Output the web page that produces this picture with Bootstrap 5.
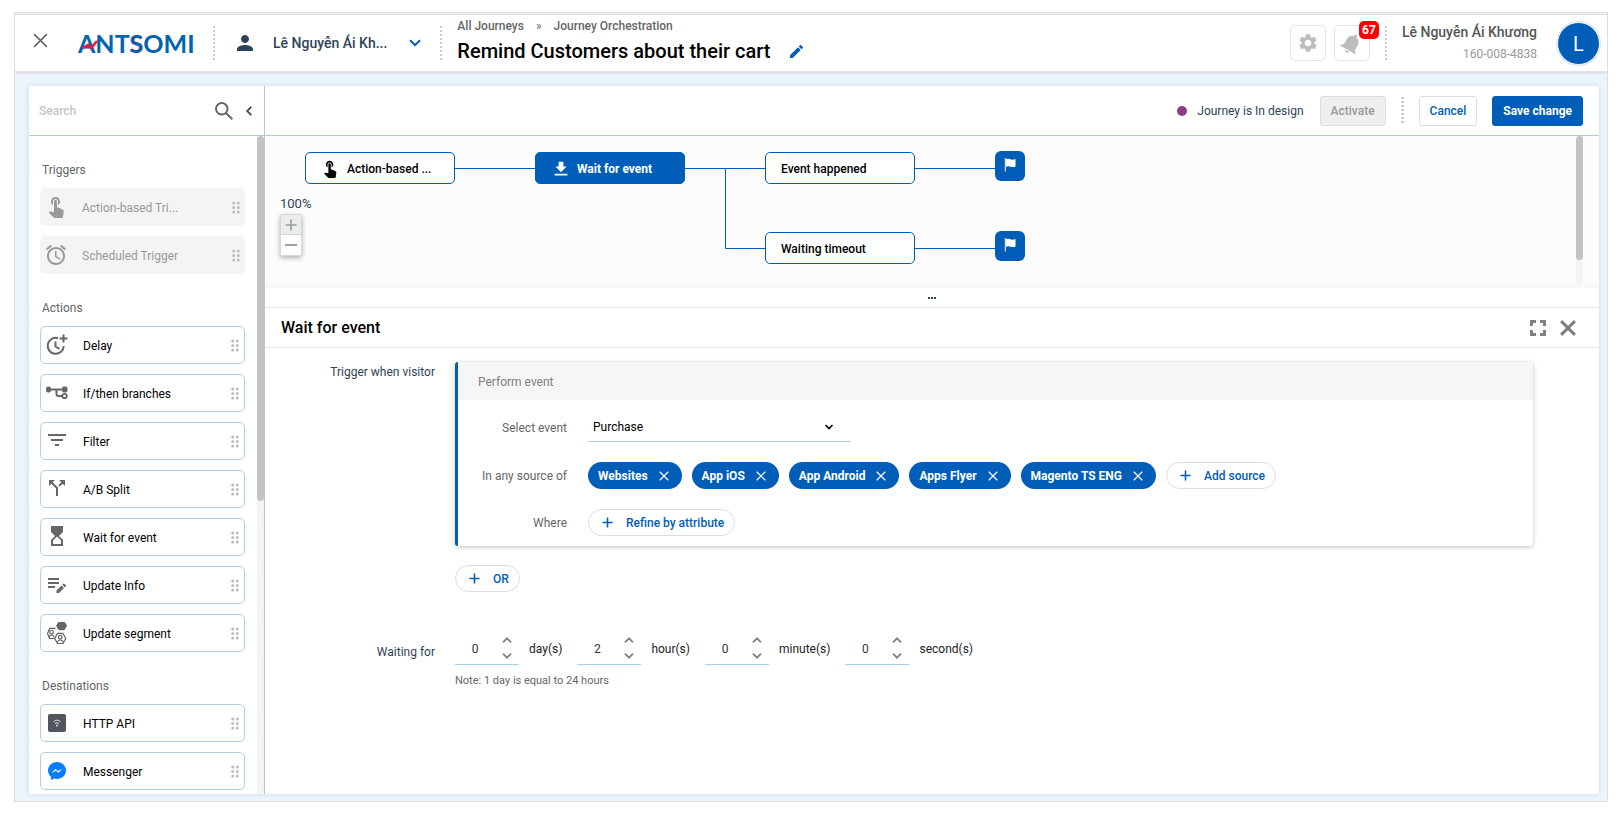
<!DOCTYPE html>
<html lang="en">
<head>
<meta charset="utf-8">
<meta name="viewport" content="width=device-width, initial-scale=1">
<title>Journey Orchestration</title>
<link href="https://cdn.jsdelivr.net/npm/bootstrap@5.3.0/dist/css/bootstrap.min.css" rel="stylesheet">
<style>
:root { --brand: #005eb8; --ink: #2f4358; --muted: #666; --edge: #b5cfe5; }
body { font-family: Roboto, "Liberation Sans", sans-serif; font-size: 12px; line-height: 20px; color: var(--ink); background: #fff; }
.app-shell { height: 100vh; padding: 12px 13px 11px 14px; }
.app-frame { border: 1px solid #ddd; background: #ebf3fb; }
.app-header { height: 60px; margin-top: 1px; padding: 0 7px 0 18px; background: #fff; border-top: 1px solid #ddd; border-bottom: 3px solid #e3e3e8; flex: none; }
.app-body { margin: 12px 8px 7px 14px; background: #fff; min-height: 0; box-shadow: 0 0 4px rgba(0,60,120,.14); }
button { font: inherit; }
.btn { --bs-btn-font-size: 12px; --bs-btn-line-height: 20px; --bs-btn-font-weight: 500; }
.plain-btn { background: none; border: 0; padding: 0; line-height: 0; color: #666; }
svg { fill: currentColor; flex: none; display: block; }
.stroked { fill: none; stroke: currentColor; }
.dots-v { width: 2px; height: 35px; background: repeating-linear-gradient(#ccc 0 2px, transparent 2px 4px); flex: none; }
.dots-v.wide { width: 3px; height: 28px; margin: 0 15px; }
.dots-v.user-split { margin: 0 15px; }
.close-btn { padding-bottom: 6px; margin-right: 30px; }
.brand-logo { position: relative; font: 700 25px/30px Lato, sans-serif; color: #0064ae; text-decoration: none; width: 115px; margin-right: 20px; }
.brand-logo svg { position: absolute; left: 4px; top: 11px; color: #f5163b; }
.brand-logo span { text-shadow: 0 0 1px #f5163b; }
.person-icon { margin: 0 16px 0 18px; }
.account-name { font-size: 14px; line-height: 20px; font-weight: 500; color: var(--ink); }
.account-btn { margin-right: 19px; }
.account-btn svg { margin-left: 22px; color: var(--brand); }
.heading-block { margin-left: 15px; }
.crumbs a { color: var(--muted); font-weight: 500; text-decoration: none; }
.crumbs span { margin: 0 12px; color: var(--muted); }
.page-title { font-size: 20px; font-weight: 500; line-height: 30px; color: #000; }
.rename-btn { color: var(--brand); margin-left: 20px; }
.icon-box { width: 36px; height: 36px; border: 1px solid #e1e5ea; border-radius: 5px; background: #fff; color: #bdbdbd; padding: 0; display: flex; align-items: center; justify-content: center; position: relative; }
.alert-count { position: absolute; right: -10px; top: -5px; background: #f00; color: #fff; border-radius: 5px; width: 20px; height: 18px; line-height: 18px; font-weight: 700; }
.user-name { font-size: 14px; font-weight: 500; color: #555; }
.user-id { color: #999; padding-top: 2px; }
.avatar { width: 43px; height: 43px; margin-left: 20px; border-radius: 50%; background: var(--brand); border: 1px solid #fff; box-shadow: 0 0 0 1px #d5e3f2; color: #fff; font-size: 20px; line-height: 42px; text-align: center; }
.side-panel { width: 236px; border-right: 1px solid #b8c8de; flex: none; }
.side-search { height: 50px; border-bottom: 1px solid #b8c8de; padding: 0 12px 0 10px; flex: none; }
.side-search input { border: 0; outline: 0; min-width: 0; color: #333; font-weight: 500; background: none; padding: 1px 0 0; }
.side-search input::placeholder { color: #c4c4c4; opacity: 1; }
.collapse-btn { margin-left: 13px; color: var(--ink); }
.side-list { padding: 0 12px 0 11px; overflow: hidden; min-height: 0; }
.side-list h2 { font-size: 12px; line-height: 20px; font-weight: 400; color: var(--muted); margin: 24px 2px 8px; }
.tool-item { width: 100%; height: 38px; margin-bottom: 10px; padding: 2px 5px 0; display: flex; align-items: center; border: 1px solid #b0d0e8; border-radius: 5px; background: #fff; color: #000; text-align: left; }
.tool-item svg { margin-bottom: 2px; }
.tool-item svg:first-child { color: #666; width: 22px; height: 22px; margin-right: 15px; }
.tool-item svg:last-child { color: #bdbdbd; margin-left: auto; }
.tool-item:disabled { border-color: #f4f4f4; background: #f4f4f4; color: #999; padding: 2px 4px 0; }
.tool-item:disabled svg:first-child { color: #999; }
.side-list .tool-item:last-child { margin-bottom: 0; }
.bar-track { width: 7px; background: #f3f3f3; border-radius: 4px; flex: none; }
.bar-thumb { background: #c3c3c3; border-radius: 4px; }
.side-panel .bar-thumb { height: 55.5%; }
.main-bar { height: 50px; border-bottom: 1px solid #b8c8de; padding-right: 16px; flex: none; }
.state-dot { width: 10px; height: 10px; border-radius: 50%; background: #8e3b84; }
.state-text { margin: 0 16px 0 10px; padding-top: 1px; }
.btn-flat { height: 30px; padding: 0 10px; border-radius: 3px; line-height: 28px; border: 1px solid #ddd; }
.btn-flat:disabled { background: #efefef; color: #999; border-color: #ddd; opacity: 1; }
.btn-cancel { color: var(--brand); background: #fff; margin-right: 15px; }
.btn-save { background: var(--brand); border-color: var(--brand); color: #fff; font-weight: 700; }
.flow-canvas { position: relative; height: 152px; background: linear-gradient(#fcfcfc 145px, #f5f5f5); overflow: hidden; flex: none; }
.flow-node { position: absolute; width: 150px; height: 32px; border: 1px solid var(--brand); border-radius: 5px; background: #fff; color: #000; font-weight: 500; padding: 2px 15px 0; display: flex; align-items: center; text-align: left; }
.flow-node svg { margin: 0 8px 1px 0; }
.flow-node.current { background: var(--brand); color: #fff; font-weight: 700; padding-left: 17px; }
.flow-end { position: absolute; width: 30px; height: 30px; border-radius: 6px; background: var(--brand); color: #fff; display: flex; align-items: center; justify-content: center; padding: 0 0 3px; border: 0; }
.flow-lines { position: absolute; left: 0; top: 0; color: var(--brand); }
.n-trigger { left: 40px; top: 16px; } .n-wait { left: 270px; top: 16px; }
.n-happened { left: 500px; top: 16px; } .n-timeout { left: 500px; top: 96px; }
.e-happened { left: 730px; top: 15px; } .e-timeout { left: 730px; top: 95px; }
.zoom-box { position: absolute; left: 15px; top: 58px; }
.zoom-box .pair { width: 22px; border: 1px solid #d4d8da; border-radius: 2px; box-shadow: 0 2px 5px rgba(0,0,0,.3); background: #fff; }
.zoom-box button { display: flex; align-items: center; justify-content: center; width: 20px; height: 20px; border: 0; padding: 0; background: #fff; color: #98a1a6; }
.zoom-box button:first-child { background: #ececec; border-bottom: 1px solid #d4d8da; }
.zoom-value { font-size: 13px; }
.canvas-bar { position: absolute; right: 16px; top: 0; height: 148px; }
.canvas-bar .bar-thumb { height: 124px; }
.drag-row { height: 20px; border: 0; border-bottom: 1px solid #e5e5e5; background: #fff; color: var(--ink); flex: none; }
.detail-head { height: 40px; border-bottom: 1px solid #e5e5e5; padding: 0 23px 0 16px; flex: none; }
.detail-head h1 { font-size: 16px; font-weight: 500; line-height: 24px; padding-top: 1px; color: #000; }
.detail-head .plain-btn { color: #808080; margin-left: 14px; }
.detail-body { padding: 14px 66px 0 0; min-height: 0; }
.field-label { width: 170px; margin-right: 20px; text-align: right; flex: none; }
.event-card { border-left: 3px solid var(--brand); border-radius: 3px; box-shadow: 0 1px 4px rgba(0,0,0,.25); background: #fff; }
.event-head { height: 38px; line-height: 40px; background: #f6f6f6; color: #808080; padding-left: 20px; }
.event-body { color: var(--muted); padding: 12px 0 10px; display: grid; gap: 20px; }
.event-body .inner-label { width: 109px; margin-right: 21px; padding-top: 1px; text-align: right; flex: none; }
.line-select { width: 263px; height: 30px; border: 0; border-bottom: 1px solid var(--edge); border-radius: 0; padding: 0 30px 0 5px; font-size: 12px; color: #000; background-color: #fff; background-size: 10px 10px; background-position: right 17px center; background-image: url("data:image/svg+xml,%3Csvg xmlns='http://www.w3.org/2000/svg' viewBox='0 0 10 10'%3E%3Cpath d='M1.5 3l3.5 3.5L8.5 3' fill='none' stroke='%23000' stroke-width='1.6'/%3E%3C/svg%3E"); }
.chip-row { gap: 10px; }
.chip-tag, .pill-btn { height: 27px; border-radius: 14px; display: inline-flex; align-items: center; white-space: nowrap; }
.chip-tag { background: var(--brand); color: #fff; font-weight: 700; padding: 0 13px 0 10px; gap: 11px; }
.chip-tag button { color: #fff; }
.pill-btn { border: 1px solid #ddd; background: #fff; color: var(--brand); font-weight: 500; padding: 0 10px 0 13px; gap: 13px; }
.or-btn { margin-top: 19px; }
.wait-block { margin-top: 39px; }
.wait-block .field-label { padding-top: 11px; }
.spin-box { width: 64px; height: 34px; border-bottom: 1px solid #a9cfe4; margin-right: 10px; }
.spin-box input { width: 40px; height: 34px; border: 0; outline: 0; padding: 2px 0 0; text-align: center; color: #333; appearance: textfield; -moz-appearance: textfield; background: none; }
.spin-box input::-webkit-inner-spin-button { display: none; -webkit-appearance: none; }
.spin-box .plain-btn { color: #808080; }
.spin-pair { display: flex; flex-direction: column; gap: 10px; margin-left: 7px; }
.wait-unit { margin-right: 15px; padding-top: 1px; color: #222; }
.note-text { font-size: 11px; color: var(--muted); margin-top: 6px; }
</style>
</head>
<body>
<svg width="0" height="0" class="position-absolute" aria-hidden="true">
  <symbol id="grip" viewBox="0 0 8 13"><circle cx="1.7" cy="2" r="1.5"/><circle cx="6.3" cy="2" r="1.5"/><circle cx="1.7" cy="6.5" r="1.5"/><circle cx="6.3" cy="6.5" r="1.5"/><circle cx="1.7" cy="11" r="1.5"/><circle cx="6.3" cy="11" r="1.5"/></symbol>
  <symbol id="touch" viewBox="1 2 22 22"><path d="M9 11.24V7.5C9 6.12 10.12 5 11.5 5S14 6.12 14 7.5v3.74c1.21-.81 2-2.18 2-3.74C16 5.01 13.99 3 11.5 3S7 5.01 7 7.5c0 1.56.79 2.93 2 3.74zm9.84 4.63l-4.54-2.26c-.17-.07-.35-.11-.54-.11H13v-6c0-.83-.67-1.5-1.5-1.5S10 6.67 10 7.5v10.74l-3.43-.72c-.08-.01-.15-.03-.24-.03-.31 0-.59.13-.79.33l-.79.8 4.94 4.94c.27.27.65.44 1.06.44h6.79c.75 0 1.33-.55 1.44-1.28l.75-5.27c.01-.07.02-.14.02-.2 0-.62-.38-1.16-.91-1.38z"/></symbol>
  <symbol id="cross" viewBox="0 0 14 14"><path d="M1 1l12 12M13 1L1 13"/></symbol>
  <symbol id="plus" viewBox="0 0 12 12"><path d="M6 .5v11M.5 6h11" stroke-width="1.7"/></symbol>
  <symbol id="up" viewBox="0 0 10 6"><path d="M1 5.3l4-4 4 4" stroke-width="1.8"/></symbol>
  <symbol id="down" viewBox="0 0 10 6"><path d="M1 .7l4 4 4-4" stroke-width="1.8"/></symbol>
  <symbol id="flag" viewBox="0 0 12 14"><path d="M.8 0h1v13.5h-1zM2 1.2c2-1 3.5-.3 5 .3 1.5.5 3 .2 4.5-.5v7.5c-1.5.7-3 .8-4.5.3-1.5-.6-3-1-5 0z"/></symbol>
</svg>

<div class="app-shell">
<div class="app-frame d-flex flex-column h-100">

  <header class="app-header d-flex align-items-center">
    <button class="plain-btn close-btn" aria-label="Close"><svg class="stroked" width="15" height="15" stroke-width="1.5"><use href="#cross"/></svg></button>
    <a class="brand-logo" href="#">ANT<span>S</span>OMI<svg width="16" height="13" viewBox="0 0 16 13"><path d="M1 9l5-3 3 3 6-7" stroke-width="2.6" stroke="currentColor" fill="none"/></svg></a>
    <div class="dots-v"></div>
    <svg class="person-icon" width="24" height="24" viewBox="0 0 24 24"><path d="M12 12c2.21 0 4-1.79 4-4s-1.79-4-4-4-4 1.79-4 4 1.79 4 4 4zm0 2c-2.67 0-8 1.34-8 4v2h16v-2c0-2.66-5.33-4-8-4z"/></svg>
    <button class="plain-btn account-btn d-flex align-items-center">
      <span class="account-name">Lê Nguyễn Ái Kh...</span>
      <svg class="stroked" width="12" height="8" viewBox="0 0 12 8" stroke-width="2"><path d="M1 1.2l5 5 5-5"/></svg>
    </button>
    <div class="dots-v"></div>
    <div class="heading-block">
      <nav class="crumbs d-flex" aria-label="Breadcrumb"><a href="#">All Journeys</a><span>»</span><a href="#">Journey Orchestration</a></nav>
      <div class="d-flex align-items-center mb-1"><span class="page-title">Remind Customers about their cart</span>
        <button class="plain-btn rename-btn" aria-label="Rename"><svg width="13" height="13" viewBox="3 3 18 18"><path d="M3 17.25V21h3.75L17.81 9.94l-3.75-3.75L3 17.25zM20.71 7.04c.39-.39.39-1.02 0-1.41l-2.34-2.34c-.39-.39-1.02-.39-1.41 0l-1.83 1.83 3.75 3.75 1.83-1.83z"/></svg></button>
      </div>
    </div>
    <div class="d-flex align-items-center ms-auto">
      <button class="icon-box me-2" aria-label="Settings"><svg width="22" height="22" viewBox="0 0 24 24"><path d="M19.14 12.94c.04-.3.06-.61.06-.94 0-.32-.02-.64-.07-.94l2.03-1.58c.18-.14.23-.41.12-.61l-1.92-3.32c-.12-.22-.37-.29-.59-.22l-2.39.96c-.5-.38-1.03-.7-1.62-.94l-.36-2.54c-.04-.24-.24-.41-.48-.41h-3.84c-.24 0-.43.17-.47.41l-.36 2.54c-.59.24-1.13.57-1.62.94l-2.39-.96c-.22-.08-.47 0-.59.22L2.74 8.87c-.12.21-.08.47.12.61l2.03 1.58c-.05.3-.09.63-.09.94s.02.64.07.94l-2.03 1.58c-.18.14-.23.41-.12.61l1.92 3.32c.12.22.37.29.59.22l2.39-.96c.5.38 1.03.7 1.62.94l.36 2.54c.05.24.24.41.48.41h3.84c.24 0 .44-.17.47-.41l.36-2.54c.59-.24 1.13-.56 1.62-.94l2.39.96c.22.08.47 0 .59-.22l1.92-3.32c.12-.22.07-.47-.12-.61l-2.01-1.58zM12 15.6c-1.98 0-3.6-1.62-3.6-3.6s1.62-3.6 3.6-3.6 3.6 1.62 3.6 3.6-1.62 3.6-3.6 3.6z"/></svg></button>
      <button class="icon-box" aria-label="Notifications"><svg width="25" height="25" viewBox="0 0 24 24"><g transform="rotate(30 12 12)"><path d="M12 22c1.1 0 2-.9 2-2h-4c0 1.1.89 2 2 2zm6-6v-5c0-3.07-1.64-5.64-4.5-6.32V4c0-.83-.67-1.5-1.5-1.5s-1.5.67-1.5 1.5v.68C7.63 5.36 6 7.92 6 11v5l-3 3h18l-3-3z"/></g></svg><span class="alert-count">67</span></button>
      <div class="dots-v user-split"></div>
      <div class="text-end"><div class="user-name">Lê Nguyễn Ái Khương</div><div class="user-id">160-008-4838</div></div>
      <div class="avatar">L</div>
    </div>
  </header>

  <div class="app-body d-flex flex-grow-1">
    <aside class="side-panel d-flex flex-column">
      <div class="side-search d-flex align-items-center">
        <input type="search" class="flex-grow-1" placeholder="Search" aria-label="Search">
        <button class="plain-btn" aria-label="Find"><svg class="stroked" width="18" height="18" viewBox="0 0 18 18" stroke-width="2"><circle cx="6.8" cy="6.8" r="5.8"/><path d="M11 11l6.3 6.3"/></svg></button>
        <button class="plain-btn collapse-btn" aria-label="Collapse"><svg class="stroked" width="6" height="10" viewBox="0 0 6 10" stroke-width="1.7"><path d="M5.3.8L1.2 5l4.1 4.2"/></svg></button>
      </div>
      <div class="d-flex flex-grow-1" style="min-height:0">
        <div class="side-list flex-grow-1">
          <section>
            <h2>Triggers</h2>
            <button class="tool-item" disabled><svg><use href="#touch"/></svg>Action-based Tri...<svg width="8" height="13"><use href="#grip"/></svg></button>
            <button class="tool-item" disabled><svg viewBox="1 1 22 22"><path d="M22 5.72l-4.6-3.86-1.29 1.53 4.6 3.86L22 5.72zM7.88 3.39L6.6 1.86 2 5.71l1.29 1.53 4.59-3.85zM12.5 8H11v6l4.75 2.85.75-1.23-4-2.37V8zM12 4c-4.97 0-9 4.03-9 9s4.02 9 9 9c4.97 0 9-4.03 9-9s-4.03-9-9-9zm0 16c-3.87 0-7-3.13-7-7s3.13-7 7-7 7 3.13 7 7-3.13 7-7 7z"/></svg>Scheduled Trigger<svg width="8" height="13"><use href="#grip"/></svg></button>
          </section>
          <section>
            <h2>Actions</h2>
            <button class="tool-item"><svg class="stroked" viewBox="0 0 22 22" stroke-width="2"><path d="M12 4.2A8 8 0 1 0 17.7 12M9.5 7.5v5l4 2.3M13.5 4.5h8M17.5.5v8"/></svg>Delay<svg width="8" height="13"><use href="#grip"/></svg></button>
            <button class="tool-item"><svg viewBox="0 0 22 22"><rect x="0" y="4.500" width="5" height="6" rx="2"/><rect x="16" y="4.500" width="5.500" height="6" rx="2"/><path fill="none" stroke="currentColor" stroke-width="2" d="M3 7.5h15M10.5 7.5v4.5q0 2 2 2H16"/><circle cx="18.500" cy="14" r="2.200" fill="none" stroke="currentColor" stroke-width="1.800"/></svg>If/then branches<svg width="8" height="13"><use href="#grip"/></svg></button>
            <button class="tool-item"><svg viewBox="1 2 22 22"><path d="M10 18h4v-2h-4v2zM3 6v2h18V6H3zm3 7h12v-2H6v2z"/></svg>Filter<svg width="8" height="13"><use href="#grip"/></svg></button>
            <button class="tool-item"><svg viewBox="1 2 22 22"><path d="M14 4l2.29 2.29-2.88 2.88 1.42 1.42 2.88-2.88L20 10V4zm-4 0H4v6l2.29-2.29 4.71 4.7V20h2v-8.41l-5.29-5.3z"/></svg>A/B Split<svg width="8" height="13"><use href="#grip"/></svg></button>
            <button class="tool-item"><svg viewBox="1 2 22 22"><path d="M6 2v6l4 4-4 4v6h12v-6l-4-4 4-4V2H6zm10 14.5V20H8v-3.500l4-4 4 4z"/></svg>Wait for event<svg width="8" height="13"><use href="#grip"/></svg></button>
            <button class="tool-item"><svg viewBox="0 0 22 22"><path d="M2 4h11v2H2zM2 8h11v2H2zM2 12h7v2H2zM10.500 16.500V19H13l5-5-2.500-2.500zM16.300 10.700l1.500-1.500 2.500 2.500-1.500 1.500z"/></svg>Update Info<svg width="8" height="13"><use href="#grip"/></svg></button>
            <button class="tool-item"><svg viewBox="0 1 22 24"><path d="M13 0h6l3 5-3 5h-6l-3-5z"/><g fill="none" stroke="currentColor" stroke-width="1.300"><path d="M9.500 8H3L.7 13.500 3 19h5M11.500 13.500h6l3 5.500-3 5.500h-6l-3-5.500z"/><circle cx="5" cy="12" r="2"/><path d="M2 17.500q3-5 6 0"/><circle cx="14.500" cy="17.500" r="2"/><path d="M11 23q3.500-5 7 0"/></g></svg>Update segment<svg width="8" height="13"><use href="#grip"/></svg></button>
          </section>
          <section>
            <h2>Destinations</h2>
            <button class="tool-item"><svg viewBox="0 0 22 22"><rect x="2" y="2" width="18" height="18" rx="2" fill="#50555e"/><g fill="none" stroke="#ddd"><path d="M7.500 9.500q3.500-3 7 0M9 11.500q2-1.500 4 0"/></g><circle cx="11" cy="13.500" r="1" fill="#ddd"/></svg>HTTP API<svg width="8" height="13"><use href="#grip"/></svg></button>
            <button class="tool-item"><svg viewBox="0 0 22 22"><path fill="#0a7cff" d="M11 2c5 0 9 3.700 9 8.500S16 19 11 19q-1.500 0-2.800-.4L5 20v-3.200C3 15.300 2 13 2 10.500 2 5.700 6 2 11 2z"/><path d="M5.500 13l4-4 2.500 2 4.500-2.200-4 4-2.500-2z" fill="#fff"/></svg>Messenger<svg width="8" height="13"><use href="#grip"/></svg></button>
          </section>
        </div>
        <div class="bar-track"><div class="bar-thumb"></div></div>
      </div>
    </aside>

    <main class="d-flex flex-column flex-grow-1" style="min-width:0">
      <div class="main-bar d-flex align-items-center justify-content-end">
        <span class="state-dot"></span><span class="state-text">Journey is In design</span>
        <button class="btn btn-flat" disabled>Activate</button>
        <div class="dots-v wide"></div>
        <button class="btn btn-flat btn-cancel">Cancel</button>
        <button class="btn btn-flat btn-save">Save change</button>
      </div>

      <div class="flow-canvas">
        <svg class="flow-lines stroked" width="740" height="120"><path d="M190 32.500h80M420 32.500h80M460.500 32.500v80H500M650 32.500h80M650 112.500h80"/></svg>
        <button class="flow-node n-trigger"><svg width="18" height="18"><use href="#touch"/></svg>Action-based ...</button>
        <button class="flow-node current n-wait"><svg width="16" height="16" viewBox="2 2 20 20"><path d="M19 9h-4V3H9v6H5l7 7 7-7zM4 18v2h16v-2H4z"/></svg>Wait for event</button>
        <button class="flow-node n-happened">Event happened</button>
        <button class="flow-end e-happened" aria-label="End"><svg width="12" height="14"><use href="#flag"/></svg></button>
        <button class="flow-node n-timeout">Waiting timeout</button>
        <button class="flow-end e-timeout" aria-label="End"><svg width="12" height="14"><use href="#flag"/></svg></button>
        <div class="zoom-box"><div class="zoom-value">100%</div>
          <div class="pair"><button aria-label="Zoom in"><svg class="stroked" width="12" height="12"><use href="#plus"/></svg></button><button aria-label="Zoom out"><svg width="12" height="2"><rect width="12" height="2"/></svg></button></div>
        </div>
        <div class="bar-track canvas-bar"><div class="bar-thumb"></div></div>
      </div>

      <button class="drag-row d-flex align-items-center justify-content-center p-0" aria-label="Resize panel"><svg width="8" height="2"><path d="M0 0h2v2H0zM3 0h2v2H3zM6 0h2v2H6z"/></svg></button>

      <div class="detail-head d-flex align-items-center">
        <h1 class="mb-0 me-auto">Wait for event</h1>
        <button class="plain-btn" aria-label="Full screen"><svg class="stroked" width="16" height="16" viewBox="0 0 16 16" stroke-width="3"><path d="M1.500 6V1.500H6M10 1.500h4.500V6M14.500 10v4.500H10M6 14.500H1.500V10"/></svg></button>
        <button class="plain-btn" aria-label="Close panel"><svg class="stroked" width="16" height="16" stroke-width="2.600"><use href="#cross"/></svg></button>
      </div>

      <div class="detail-body flex-grow-1">
        <div class="d-flex">
          <div class="field-label">Trigger when visitor</div>
          <div class="flex-grow-1" style="min-width:0">
            <div class="event-card">
              <div class="event-head">Perform event</div>
              <div class="event-body">
                <div class="d-flex align-items-center"><label class="inner-label" for="ev">Select event</label>
                  <select id="ev" class="form-select line-select"><option>Purchase</option></select></div>
                <div class="d-flex align-items-center"><span class="inner-label">In any source of</span>
                  <div class="chip-row d-flex flex-wrap">
                    <span class="chip-tag">Websites<button class="plain-btn" aria-label="Remove"><svg class="stroked" width="10" height="10" stroke-width="1.700"><use href="#cross"/></svg></button></span>
                    <span class="chip-tag">App iOS<button class="plain-btn" aria-label="Remove"><svg class="stroked" width="10" height="10" stroke-width="1.700"><use href="#cross"/></svg></button></span>
                    <span class="chip-tag">App Android<button class="plain-btn" aria-label="Remove"><svg class="stroked" width="10" height="10" stroke-width="1.700"><use href="#cross"/></svg></button></span>
                    <span class="chip-tag">Apps Flyer<button class="plain-btn" aria-label="Remove"><svg class="stroked" width="10" height="10" stroke-width="1.700"><use href="#cross"/></svg></button></span>
                    <span class="chip-tag">Magento TS ENG<button class="plain-btn" aria-label="Remove"><svg class="stroked" width="10" height="10" stroke-width="1.700"><use href="#cross"/></svg></button></span>
                    <button class="pill-btn"><svg class="stroked" width="11" height="11"><use href="#plus"/></svg>Add source</button>
                  </div></div>
                <div class="d-flex align-items-center"><span class="inner-label">Where</span>
                  <button class="pill-btn"><svg class="stroked" width="11" height="11"><use href="#plus"/></svg>Refine by attribute</button></div>
              </div>
            </div>
            <button class="pill-btn or-btn"><svg class="stroked" width="11" height="11"><use href="#plus"/></svg>OR</button>
          </div>
        </div>

        <div class="wait-block d-flex">
          <div class="field-label">Waiting for</div>
          <div>
            <div class="d-flex align-items-center">
              <div class="spin-box d-flex align-items-center"><input id="d" type="number" value="0"><div class="spin-pair"><button class="plain-btn" aria-label="More days"><svg class="stroked" width="10" height="6"><use href="#up"/></svg></button><button class="plain-btn" aria-label="Fewer days"><svg class="stroked" width="10" height="6"><use href="#down"/></svg></button></div></div><label class="wait-unit" for="d">day(s)</label>
              <div class="spin-box d-flex align-items-center"><input id="h" type="number" value="2"><div class="spin-pair"><button class="plain-btn" aria-label="More hours"><svg class="stroked" width="10" height="6"><use href="#up"/></svg></button><button class="plain-btn" aria-label="Fewer hours"><svg class="stroked" width="10" height="6"><use href="#down"/></svg></button></div></div><label class="wait-unit" for="h">hour(s)</label>
              <div class="spin-box d-flex align-items-center"><input id="m" type="number" value="0"><div class="spin-pair"><button class="plain-btn" aria-label="More minutes"><svg class="stroked" width="10" height="6"><use href="#up"/></svg></button><button class="plain-btn" aria-label="Fewer minutes"><svg class="stroked" width="10" height="6"><use href="#down"/></svg></button></div></div><label class="wait-unit" for="m">minute(s)</label>
              <div class="spin-box d-flex align-items-center"><input id="s" type="number" value="0"><div class="spin-pair"><button class="plain-btn" aria-label="More seconds"><svg class="stroked" width="10" height="6"><use href="#up"/></svg></button><button class="plain-btn" aria-label="Fewer seconds"><svg class="stroked" width="10" height="6"><use href="#down"/></svg></button></div></div><label class="wait-unit" for="s">second(s)</label>
            </div>
            <div class="note-text">Note: 1 day is equal to 24 hours</div>
          </div>
        </div>
      </div>
    </main>
  </div>
</div>
</div>
<script src="https://cdn.jsdelivr.net/npm/bootstrap@5.3.0/dist/js/bootstrap.bundle.min.js"></script>
</body>
</html>
